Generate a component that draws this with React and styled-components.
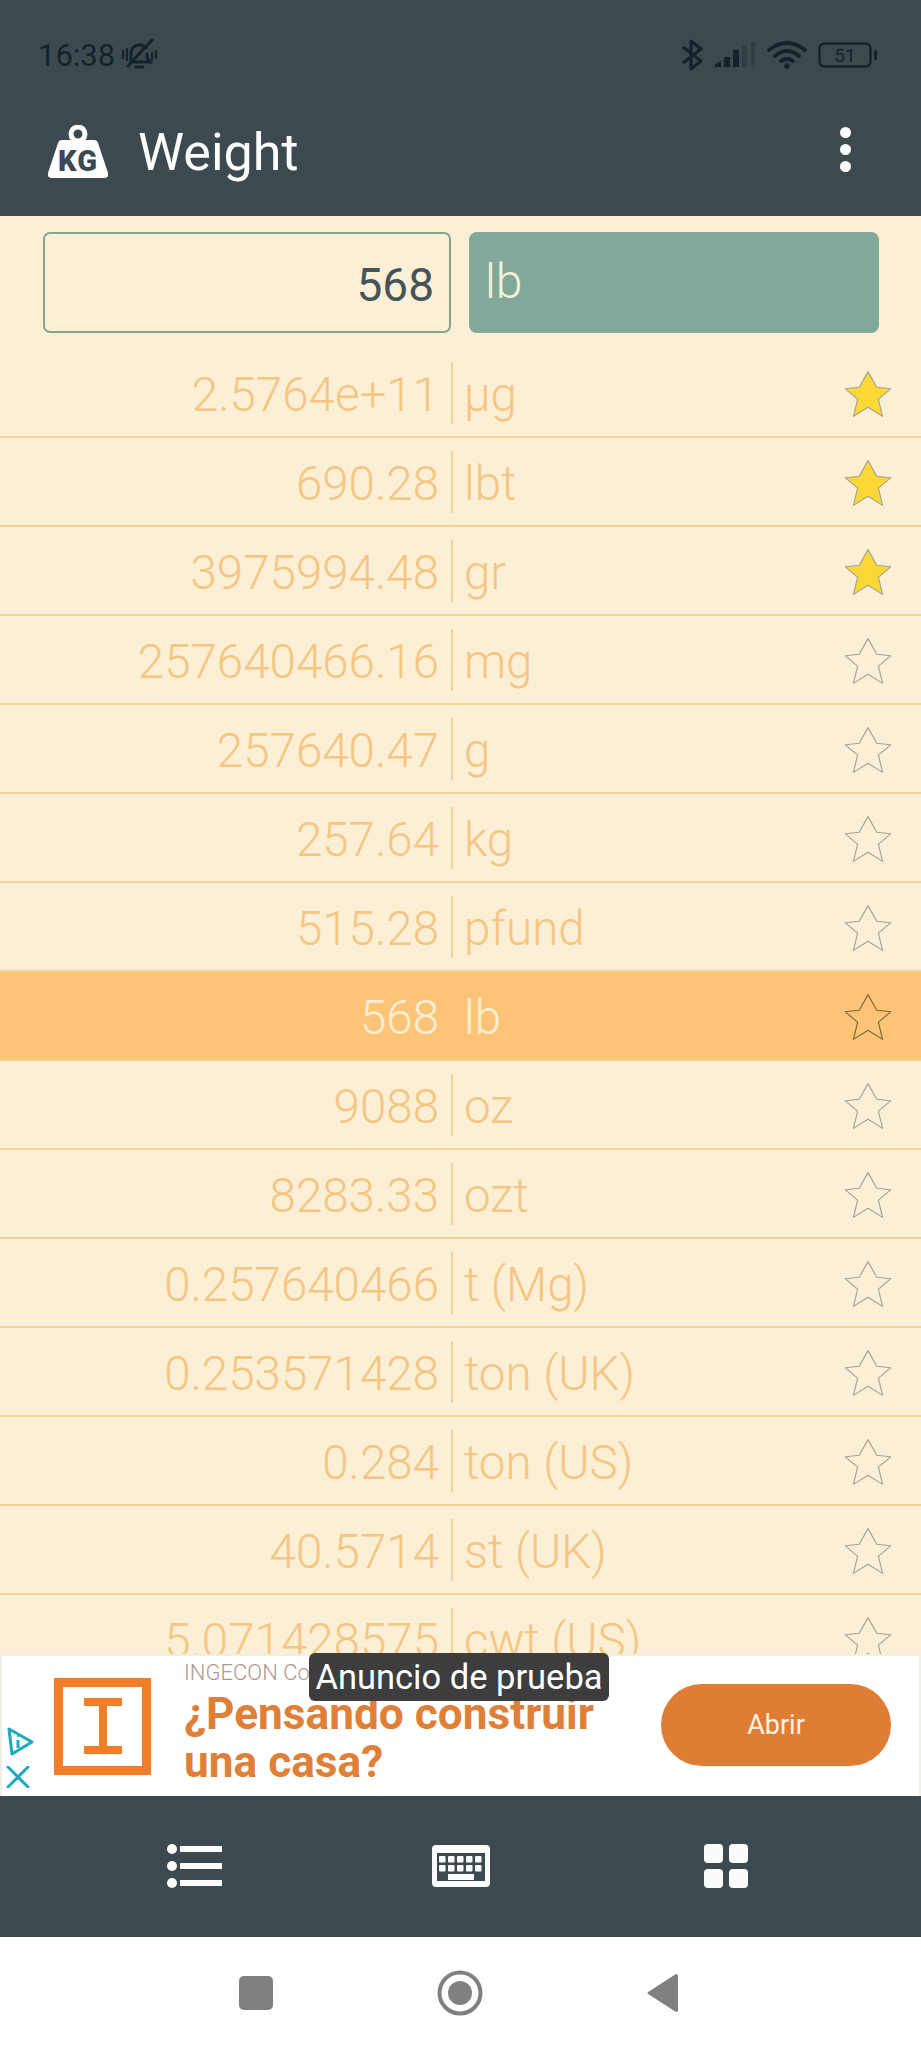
import React from "react";
import styled, { createGlobalStyle } from "styled-components";

const units = [
  ["2.5764e+11", "µg", true],
  ["690.28", "lbt", true],
  ["3975994.48", "gr", true],
  ["257640466.16", "mg"],
  ["257640.47", "g"],
  ["257.64", "kg"],
  ["515.28", "pfund"],
  ["568", "lb", false, true],
  ["9088", "oz"],
  ["8283.33", "ozt"],
  ["0.257640466", "t (Mg)"],
  ["0.253571428", "ton (UK)"],
  ["0.284", "ton (US)"],
  ["40.5714", "st (UK)"],
  ["5.071428575", "cwt (US)"],
];

const Global = createGlobalStyle`
  html, body { margin: 0; padding: 0; background: #fbf0d6; }
  * { box-sizing: border-box; }
`;

const Screen = styled.div`
  width: 921px;
  height: 2048px;
  display: flex;
  flex-direction: column;
  font-family: Roboto, "Liberation Sans", sans-serif;
  background: #fbf0d6;
  overflow: hidden;
`;

const Header = styled.header`
  height: 216px;
  flex: none;
  background: #3c4a50;
  display: flex;
  flex-direction: column;
`;

const StatusBar = styled.div`
  height: 110px;
  padding: 0 43px 0 38px;
  display: flex;
  align-items: center;
  color: #14232a;
`;

const Time = styled.span`
  font-size: 31px;
  margin-right: 5px;
`;

const StatusRight = styled.div`
  margin-left: auto;
  display: flex;
  align-items: center;
  gap: 11px;
`;

const AppBar = styled.div`
  height: 86px;
  display: flex;
  align-items: center;
  padding: 0 70px 2px 48px;
`;

const Title = styled.h1`
  margin: 0 0 0 30px;
  color: #fbfcfc;
  font-size: 52px;
  font-weight: 400;
  flex: 1;
`;

const Dots = styled.div`
  display: flex;
  flex-direction: column;
  gap: 6px;
  margin-bottom: 6px;
  span {
    width: 11px;
    height: 11px;
    border-radius: 50%;
    background: #fbfdfd;
  }
`;

const InputRow = styled.div`
  height: 133px;
  flex: none;
  padding: 16px 42px 16px 43px;
  display: flex;
  gap: 18px;
`;

const Field = styled.div`
  width: 408px;
  height: 101px;
  border: 2px solid #84a68e;
  border-radius: 7px;
  display: flex;
  align-items: center;
  justify-content: flex-end;
  padding: 5px 15px 0 0;
  font-size: 46px;
  color: #46545a;
`;

const UnitBox = styled.div`
  flex: 1;
  height: 101px;
  border-radius: 8px;
  background: #80a99a;
  display: flex;
  align-items: center;
  padding-left: 16px;
  padding-bottom: 2px;
  font-size: 48px;
  font-weight: 300;
  color: #faf0d6;
`;

const List = styled.div`
  flex: 1;
  min-height: 0;
  overflow: hidden;
`;

const Row = styled.div`
  height: 89px;
  display: flex;
  align-items: center;
  border-bottom: 2px solid #f6d094;
  background: ${(p) => (p.$active ? "#fdc477" : "transparent")};
  color: ${(p) => (p.$active ? "#fbefd3" : "#f7c582")};
  font-size: 47.5px;
  font-weight: 300;
`;

const Value = styled.div`
  width: 451px;
  padding: 5px 12px 0 0;
  text-align: right;
  white-space: nowrap;
`;

const Unit = styled.div`
  flex: 1;
  height: 62px;
  display: flex;
  align-items: center;
  padding: 5px 0 0 11px;
  border-left: 2px solid ${(p) => (p.$active ? "transparent" : "#f6d094")};
`;

const StarWrap = styled.svg`
  width: 48px;
  height: 48px;
  margin: 2px 29px 0 0;
  flex: none;
`;

const Ad = styled.div`
  position: relative;
  height: 142px;
  flex: none;
  background: #fff;
  border: 2px solid #f1eee8;
  border-bottom: 0;
  display: flex;
  align-items: center;
`;

const AdChoices = styled.div`
  width: 52px;
  flex: none;
  align-self: flex-end;
  padding: 0 0 8px 4px;
  display: flex;
  flex-direction: column;
  gap: 9px;
`;

const Logo = styled.div`
  width: 97px;
  height: 97px;
  flex: none;
  border: 9px solid #f27d27;
  display: flex;
  align-items: center;
  justify-content: center;
`;

const AdText = styled.div`
  margin-left: 33px;
  flex: 1;
`;

const Brand = styled.div`
  font-size: 22px;
  font-weight: 300;
  color: #b0978a;
  line-height: 26px;
  margin: -6px 0 4px;
`;

const Headline = styled.div`
  font-size: 44.2px;
  font-weight: 700;
  line-height: 48px;
  color: #e07f38;
`;

const OpenButton = styled.div`
  width: 230px;
  height: 82px;
  margin: 0 28px 2px 0;
  border-radius: 41px;
  background: #e07d35;
  color: #fdf1e4;
  font-size: 27px;
  display: flex;
  align-items: center;
  justify-content: center;
`;

const TestLabel = styled.div`
  position: absolute;
  left: 307px;
  top: -3px;
  width: 300px;
  height: 48px;
  border-radius: 6px;
  background: #3d3d3d;
  color: #fff;
  font-size: 34.5px;
  display: flex;
  align-items: center;
  justify-content: center;
`;

const BottomBar = styled.nav`
  height: 141px;
  flex: none;
  background: #3c4a50;
  display: grid;
  grid-template-columns: 264px 273px 44px;
  align-items: center;
  padding: 0 0 2px 167px;
`;

const SystemNav = styled.div`
  height: 111px;
  flex: none;
  background: #fff;
  display: flex;
  align-items: center;
  justify-content: space-between;
  padding: 0 243px 0 239px;
`;

function Star({ on, active }) {
  return (
    <StarWrap viewBox="-4 -4 148 146">
      <polygon
        points="70,0 97,48 140,53 102,85 115,138 70,110 25,138 38,85 0,53 43,48"
        fill={on ? "#fbd836" : "none"}
        stroke={active ? "#7d6436" : "#a3a193"}
        strokeWidth="3.5"
        strokeLinejoin="round"
      />
    </StarWrap>
  );
}

function WeightIcon() {
  return (
    <svg width="60" height="54" viewBox="0 0 60 54">
      <circle cx="30" cy="9" r="7" fill="none" stroke="#fff" strokeWidth="5" />
      <path d="M14 15 H46 Q49 15 50 18 L60 48 Q61 53 56 53 H4 Q-1 53 0 48 L10 18 Q11 15 14 15 Z" fill="#fff" />
      <text x="30" y="46" textAnchor="middle" fontFamily="Roboto, sans-serif" fontWeight="900" fontSize="29" fill="#3c4a50" letterSpacing="1">KG</text>
    </svg>
  );
}

function MuteBell() {
  return (
    <svg width="38" height="34" viewBox="0 0 38 34" fill="none" stroke="#14232a" strokeWidth="3" strokeLinecap="round">
      <path d="M11 24 V15 a8.5 8.5 0 0 1 15 -5 M27 16 V20 l3 4 H13" />
      <path d="M16 29 h7" />
      <path d="M8 28 L32 2" />
      <path d="M3 13 v7 M7 11 v11 M36 13 v7 M32 15 v7" strokeWidth="2.2" />
    </svg>
  );
}

function Bluetooth() {
  return (
    <svg width="22" height="34" viewBox="0 0 22 34" fill="none" stroke="#14232a" strokeWidth="3.2" strokeLinejoin="round">
      <path d="M2 9 L20 23 L10 31 V3 L20 11 L2 25" />
    </svg>
  );
}

function Signal() {
  return (
    <svg width="42" height="28" viewBox="0 0 42 28" fill="#14232a">
      <path d="M1 26 V23 L7 20 V26 Z" />
      <rect x="10" y="16" width="6" height="10" />
      <rect x="19" y="9" width="6" height="17" />
      <rect x="28" y="5" width="5" height="21" opacity="0.3" />
      <rect x="37" y="1" width="4" height="25" opacity="0.3" />
    </svg>
  );
}

function Wifi() {
  return (
    <svg width="40" height="30" viewBox="0 0 40 30" fill="none" stroke="#14232a" strokeWidth="3.8" strokeLinecap="round">
      <path d="M2 10 Q20 -4 38 10" />
      <path d="M8 16 Q20 6 32 16" />
      <path d="M14 21 Q20 17 26 21" />
      <circle cx="20" cy="26" r="2.8" fill="#14232a" stroke="none" />
    </svg>
  );
}

function Battery() {
  return (
    <svg width="60" height="26" viewBox="0 0 60 26">
      <rect x="1.5" y="1.5" width="51" height="23" rx="5" fill="none" stroke="#14232a" strokeWidth="2.4" />
      <rect x="56" y="8" width="3" height="10" rx="1.5" fill="#14232a" />
      <text x="27" y="20" textAnchor="middle" fontFamily="Roboto, sans-serif" fontSize="19" fill="#14232a">51</text>
    </svg>
  );
}

function ListIcon() {
  return (
    <svg width="55" height="46" viewBox="0 0 55 46" fill="#fbfdfd">
      <circle cx="5" cy="6" r="5" />
      <circle cx="5" cy="23" r="5" />
      <circle cx="5" cy="40" r="5" />
      <rect x="13" y="3" width="42" height="6" />
      <rect x="13" y="20" width="42" height="6" />
      <rect x="13" y="37" width="42" height="6" />
    </svg>
  );
}

function KeyboardIcon() {
  const keys = [];
  for (let r = 0; r < 2; r++) {
    for (let c = 0; c < 5; c++) {
      keys.push(<rect key={r + "-" + c} x={8 + c * 9} y={12 + r * 9} width="6.5" height="6.5" rx="1" />);
    }
  }
  return (
    <svg width="60" height="44" viewBox="0 0 60 44" fill="#fbfdfd">
      <path fillRule="evenodd" d="M5 1 H55 Q59 1 59 5 V39 Q59 43 55 43 H5 Q1 43 1 39 V5 Q1 1 5 1 Z M6 9 V37 H54 V9 Z" />
      {keys}
      <rect x="17" y="30" width="26" height="6" />
    </svg>
  );
}

function GridIcon() {
  return (
    <svg width="44" height="44" viewBox="0 0 44 44" fill="#fbfdfd">
      <rect x="0" y="0" width="19" height="19" rx="4" />
      <rect x="25" y="0" width="19" height="19" rx="4" />
      <rect x="0" y="25" width="19" height="19" rx="4" />
      <rect x="25" y="25" width="19" height="19" rx="4" />
    </svg>
  );
}

function AdChoicesIcon() {
  return (
    <>
      <svg width="28" height="30" viewBox="0 0 28 30" fill="none" stroke="#1fa8bf" strokeWidth="3" strokeLinejoin="round">
        <path d="M3 2 L26 15 L6 27 Z" />
        <path d="M12 13 V21" />
        <circle cx="12" cy="9" r="1" fill="#1fa8bf" stroke="none" />
      </svg>
      <svg width="24" height="22" viewBox="0 0 24 22" stroke="#1fa8bf" strokeWidth="3" strokeLinecap="round">
        <path d="M2 1 L22 21 M22 1 L2 21" />
      </svg>
    </>
  );
}

export default function App() {
  return (
    <Screen>
      <Global />
      <Header>
        <StatusBar>
          <Time>16:38</Time>
          <MuteBell />
          <StatusRight>
            <Bluetooth />
            <Signal />
            <Wifi />
            <Battery />
          </StatusRight>
        </StatusBar>
        <AppBar>
          <WeightIcon />
          <Title>Weight</Title>
          <Dots>
            <span />
            <span />
            <span />
          </Dots>
        </AppBar>
      </Header>
      <InputRow>
        <Field>568</Field>
        <UnitBox>lb</UnitBox>
      </InputRow>
      <List>
        {units.map(([value, unit, on, active]) => (
          <Row key={unit} $active={active}>
            <Value>{value}</Value>
            <Unit $active={active}>{unit}</Unit>
            <Star on={on} active={active} />
          </Row>
        ))}
      </List>
      <Ad>
        <AdChoices>
          <AdChoicesIcon />
        </AdChoices>
        <Logo>
          <svg width="38" height="56" viewBox="0 0 38 56" fill="#f27d27">
            <rect x="0" y="0" width="38" height="8" />
            <rect x="0" y="48" width="38" height="8" />
            <rect x="15" y="0" width="8" height="56" />
          </svg>
        </Logo>
        <AdText>
          <Brand>INGECON Construcciones</Brand>
          <Headline>
            ¿Pensando construir
            <br />
            una casa?
          </Headline>
        </AdText>
        <OpenButton>Abrir</OpenButton>
        <TestLabel>Anuncio de prueba</TestLabel>
      </Ad>
      <BottomBar>
        <ListIcon />
        <KeyboardIcon />
        <GridIcon />
      </BottomBar>
      <SystemNav>
        <svg width="34" height="34" viewBox="0 0 34 34">
          <rect width="34" height="34" rx="5" fill="#808080" />
        </svg>
        <svg width="46" height="46" viewBox="0 0 46 46">
          <circle cx="23" cy="23" r="20.5" fill="none" stroke="#808080" strokeWidth="4" />
          <circle cx="23" cy="23" r="12" fill="#808080" />
        </svg>
        <svg width="31" height="40" viewBox="0 0 31 40">
          <path d="M29 1 Q31 1 31 3 V37 Q31 39 29 39 L1 21 Q0 20 1 19 Z" fill="#808080" />
        </svg>
      </SystemNav>
    </Screen>
  );
}
